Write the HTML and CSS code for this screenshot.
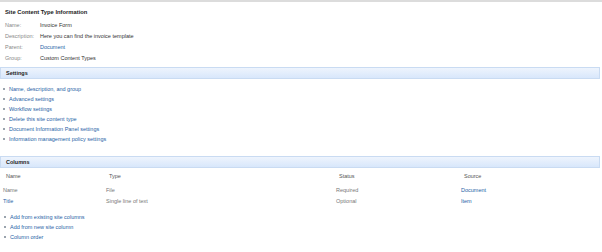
FILE: index.html
```html
<!DOCTYPE html>
<html lang="en">
<head>
    <meta charset="UTF-8">
    <title>Site Content Type</title>
    <link rel="stylesheet" href="styles.css">
</head>
<body>
    <div class="topline"></div>

    <!-- Content type info -->
    <section class="info">
        <h1>Site Content Type Information</h1>
        <div class="props">
            <span class="label">Name:</span><span>Invoice Form</span>
            <span class="label">Description:</span><span>Here you can find the invoice template</span>
            <span class="label">Parent:</span><a href="#">Document</a>
            <span class="label">Group:</span><span>Custom Content Types</span>
        </div>
    </section>

    <!-- Settings -->
    <div class="bar">Settings</div>
    <ul class="links settings">
        <li><a href="#">Name, description, and group</a></li>
        <li><a href="#">Advanced settings</a></li>
        <li><a href="#">Workflow settings</a></li>
        <li><a href="#">Delete this site content type</a></li>
        <li><a href="#">Document Information Panel settings</a></li>
        <li><a href="#">Information management policy settings</a></li>
    </ul>

    <!-- Columns -->
    <div class="bar">Columns</div>
    <div class="columns">
        <div class="head">Name</div>
        <div class="head">Type</div>
        <div class="head">Status</div>
        <div class="head">Source</div>

        <div class="muted">Name</div>
        <div class="muted">File</div>
        <div class="muted">Required</div>
        <div><a href="#">Document</a></div>

        <div><a href="#">Title</a></div>
        <div class="muted">Single line of text</div>
        <div class="muted">Optional</div>
        <div><a href="#">Item</a></div>
    </div>
    <ul class="links columnlinks">
        <li><a href="#">Add from existing site columns</a></li>
        <li><a href="#">Add from new site column</a></li>
        <li><a href="#">Column order</a></li>
    </ul>
</body>
</html>
```

FILE: styles.css
```css
/* General */
body {
    margin: 0;
    font-family: "Liberation Sans", Arial, sans-serif;
    font-size: 5.5px;
    color: #444;
    background: #fff;
}

a {
    color: #1f5fa6;
    text-decoration: none;
}

.topline {
    height: 2px;
    background: #dcdcdc;
}

/* Info block */
.info {
    padding: 6px 5px 4px 5px;
}

.info h1 {
    margin: 0 0 2px 0;
    font-size: 5.8px;
    font-weight: bold;
    color: #222;
    line-height: 9px;
}

.props {
    display: grid;
    grid-template-columns: 35px 1fr;
    grid-auto-rows: 11px;
    align-items: center;
}

.props span {
    color: #333;
}

.props .label {
    color: #888;
}

/* Section bars */
.bar {
    height: 10px;
    line-height: 10px;
    margin-right: 2px;
    padding-left: 5px;
    background: linear-gradient(#eef4fd, #d8e7fb);
    border: 1px solid #c9dbf2;
    font-weight: bold;
    color: #222;
}

/* Link lists */
.links {
    list-style: none;
    margin: 0;
    padding: 0 0 0 3px;
}

.links li {
    height: 10px;
    line-height: 10px;
    display: flex;
    align-items: center;
}

.links li::before {
    content: "";
    width: 2px;
    height: 2px;
    margin-right: 4px;
    background: #9aa3ad;
}

.settings {
    margin: 5px 0 12px 0;
}

.columnlinks {
    margin-top: 6px;
    padding-left: 4px;
}

/* Columns table */
.columns {
    display: grid;
    grid-template-columns: 103px 230px 125px 1fr;
    grid-template-rows: 16px 11px 11px;
    align-items: center;
    padding-left: 3px;
}

.columns .head {
    padding-left: 3px;
    color: #555;
}

.columns .muted {
    color: #777;
}
```
